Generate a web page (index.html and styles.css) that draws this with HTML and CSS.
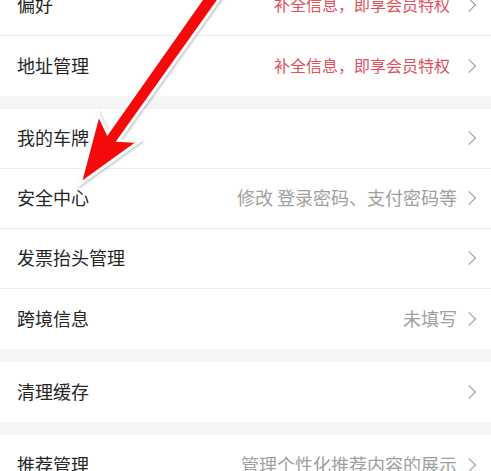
FILE: index.html
```html
<!DOCTYPE html>
<html lang="zh-CN">
<head>
  <meta charset="UTF-8">
  <title>设置</title>
  <link rel="stylesheet" href="styles.css">
</head>
<body>

  <div class="page">

    <div class="group">
      <div class="row">
        <span class="label">偏好</span>
        <span class="hint red">补全信息，即享会员特权</span>
        <span class="arrow"></span>
      </div>
      <div class="row">
        <span class="label">地址管理</span>
        <span class="hint red">补全信息，即享会员特权</span>
        <span class="arrow"></span>
      </div>
    </div>

    <div class="group">
      <div class="row">
        <span class="label">我的车牌</span>
        <span class="arrow"></span>
      </div>
      <div class="row">
        <span class="label">安全中心</span>
        <span class="hint">修改 登录密码、支付密码等</span>
        <span class="arrow"></span>
      </div>
      <div class="row">
        <span class="label">发票抬头管理</span>
        <span class="arrow"></span>
      </div>
      <div class="row">
        <span class="label">跨境信息</span>
        <span class="hint">未填写</span>
        <span class="arrow"></span>
      </div>
    </div>

    <div class="group">
      <div class="row">
        <span class="label">清理缓存</span>
        <span class="arrow"></span>
      </div>
    </div>

    <div class="group">
      <div class="row">
        <span class="label">推荐管理</span>
        <span class="hint">管理个性化推荐内容的展示</span>
        <span class="arrow"></span>
      </div>
    </div>

    <!-- red pointer drawn over the list -->
    <svg class="pointer" width="491" height="200" viewBox="0 0 491 200">
      <polygon points="211,-14 107.5,133 98.5,114 80,184 139,141.5 118.5,140.5 223,-6"
               fill="#f40a0a" stroke="#fff" stroke-width="3" stroke-linejoin="miter"/>
    </svg>

  </div>

</body>
</html>
```

FILE: styles.css
```css
body {
  margin: 0;
  background: #f5f5f5;
  font-family: "Noto Sans CJK SC", "Noto Sans", sans-serif;
  overflow: hidden;
}

.page {
  position: relative;
  margin-top: -24px;
}

.group {
  background: white;
  margin-bottom: 13px;
}

.row {
  display: flex;
  align-items: center;
  height: 60px;
  box-sizing: border-box;
  padding: 0 15px 3px 17px;
  border-bottom: 1px solid #ececec;
}

.group .row:last-child {
  border-bottom: none;
}

.label {
  flex: 1;
  font-size: 18px;
  color: #262626;
}

.hint {
  font-size: 18px;
  color: #a0a0a0;
  margin-right: 7px;
}

.hint.red {
  font-size: 16px;
  color: #e2505c;
  margin-right: 14px;
}

.arrow {
  width: 10px;
  height: 10px;
  box-sizing: border-box;
  border-top: 1.5px solid #9a9a9a;
  border-right: 1.5px solid #9a9a9a;
  transform: rotate(45deg);
  margin: 2px 2px 0 0;
}

.pointer {
  position: absolute;
  left: 0;
  top: 24px;
  overflow: visible;
  filter: drop-shadow(1px 1px 1px rgba(0,0,0,0.25));
}
```
